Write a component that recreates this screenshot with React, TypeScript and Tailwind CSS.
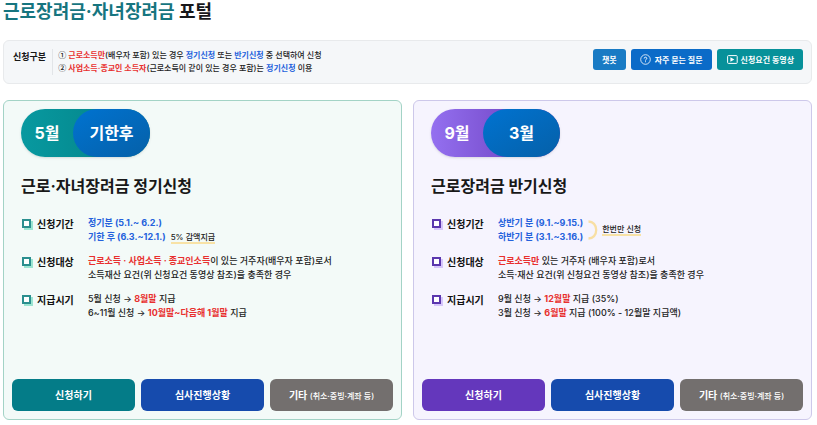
import type { ReactNode } from "react";

type Theme = {
  card: string;
  pill: string;
  box: string;
  apply: string;
};

const green: Theme = {
  card: "border-[#a3d3c6] bg-[#f3faf8]",
  pill: "from-[#0899a0] to-[#037f83]",
  box: "border-[#2b8f8f] shadow-[2px_2px_0_#9be5d2]",
  apply: "bg-[#047c88]",
};

const purple: Theme = {
  card: "border-[#cdc8ea] bg-[#f6f4fe]",
  pill: "from-[#9470f0] to-[#6534b4]",
  box: "border-[#5b37ae] shadow-[2px_2px_0_#d6c6fb]",
  apply: "bg-[#6437bc]",
};

function Red({ children }: { children: ReactNode }) {
  return <strong className="font-bold text-[#e8302f]">{children}</strong>;
}

function Blue({ children }: { children: ReactNode }) {
  return <strong className="font-bold text-[#2461dc]">{children}</strong>;
}

function Marked({ children }: { children: ReactNode }) {
  return (
    <span className="border-b-2 border-[#f8e2a6] text-[8px] leading-[9px] font-medium text-[#222]">
      {children}
    </span>
  );
}

function Numeral({ children }: { children: ReactNode }) {
  return <span className="font-['Noto_Sans_CJK_KR',sans-serif] leading-none">{children}</span>;
}

function Row({ theme, label, children }: { theme: Theme; label: string; children: ReactNode }) {
  return (
    <div className="flex items-start">
      <span className={`mt-[3px] mr-[6px] size-[9px] shrink-0 border-2 bg-white ${theme.box}`} />
      <dt className="w-[51px] shrink-0 text-[10px] leading-4 font-bold text-[#111]">{label}</dt>
      <dd className="text-[9px] leading-[14px] font-medium whitespace-nowrap text-[#222]">{children}</dd>
    </div>
  );
}

function Card({
  theme,
  first,
  second,
  title,
  children,
}: {
  theme: Theme;
  first: string;
  second: string;
  title: string;
  children: ReactNode;
}) {
  const action = "h-8 flex-1 rounded-md text-[10px] font-bold whitespace-nowrap text-white";
  return (
    <section className={`flex min-w-0 flex-1 flex-col rounded-md border p-2 ${theme.card}`}>
      <div className="px-[9px]">
        <div
          className={`flex h-12 w-[129px] rounded-full bg-linear-to-r text-base font-bold text-white shadow-sm ${theme.pill}`}
        >
          <span className="flex flex-1 items-center justify-center">{first}</span>
          <span className="flex w-[77px] items-center justify-center rounded-full bg-linear-to-br from-[#0073d1] to-[#0560a8]">
            {second}
          </span>
        </div>
        <h2 className="mt-[17px] text-base leading-6 font-bold text-[#181818]">{title}</h2>
        <dl className="mt-[18px] flex flex-col gap-[10px] pl-px">{children}</dl>
      </div>
      <div className="mt-[59px] flex gap-[6px]">
        <button type="button" className={`${action} ${theme.apply}`}>
          신청하기
        </button>
        <button type="button" className={`${action} bg-[#164bad]`}>
          심사진행상황
        </button>
        <button type="button" className={`${action} bg-[#736f6e]`}>
          기타 <span className="text-[8px] font-medium">(취소·증빙·계좌 등)</span>
        </button>
      </div>
    </section>
  );
}

export default function App() {
  const link = "flex h-[21px] items-center rounded-[3px] text-[8px] font-bold text-white";
  return (
    <main className="bg-white pr-[5px] pb-[6px] pl-[3px] font-[Inter,'Noto_Sans_CJK_KR',sans-serif]">
      <h1 className="text-lg leading-6 font-bold text-[#18181b]">
        <span className="text-[#16757f]">근로장려금·자녀장려금</span> 포털
      </h1>

      <div className="mt-4 flex items-start justify-between rounded-md border border-[#e8eaec] bg-[#f5f7f9] pt-2 pr-2 pb-2 pl-[9px]">
        <div className="flex items-start">
          <strong className="text-[9px] leading-4 font-bold text-[#181818]">신청구분</strong>
          <ol className="ml-[6px] border-l border-[#e2e5e8] pl-[5px] text-[8px] leading-[13px] font-medium text-[#222]">
            <li>
              <Numeral>①</Numeral> <Red>근로소득만</Red>(배우자 포함) 있는 경우 <Blue>정기신청</Blue> 또는{" "}
              <Blue>반기신청</Blue> 중 선택하여 신청
            </li>
            <li>
              <Numeral>②</Numeral> <Red>사업소득·종교인 소득자</Red>(근로소득이 같이 있는 경우 포함)는{" "}
              <Blue>정기신청</Blue> 이용
            </li>
          </ol>
        </div>
        <div className="flex shrink-0 gap-[5px]">
          <button type="button" className={`${link} bg-[#197bc4] px-[9px]`}>
            챗봇
          </button>
          <button type="button" className={`${link} gap-1 bg-[#0b6bc8] px-[9px]`}>
            <svg viewBox="0 0 11 11" className="size-[11px]" fill="none" stroke="currentColor" aria-hidden="true">
              <circle cx="5.5" cy="5.5" r="4.8" strokeWidth="0.8" />
              <path d="M4.2 4.5a1.3 1.3 0 1 1 1.9 1.1c-.4.2-.6.4-.6.9M5.5 7.3v.9" strokeWidth="0.9" />
            </svg>
            자주 묻는 질문
          </button>
          <button type="button" className={`${link} gap-[3px] bg-[#07919a] pr-[9px] pl-[10px]`}>
            <svg viewBox="0 0 11 9" className="h-[9px] w-[11px]" fill="none" stroke="currentColor" aria-hidden="true">
              <rect x="0.6" y="0.6" width="9.6" height="7.8" rx="0.8" strokeWidth="1" />
              <path d="M3.4 2.2v4.6l4-2.3z" fill="currentColor" stroke="none" />
            </svg>
            신청요건 동영상
          </button>
        </div>
      </div>

      <div className="mt-4 flex gap-[11px]">
        <Card theme={green} first="5월" second="기한후" title="근로·자녀장려금 정기신청">
          <Row theme={green} label="신청기간">
            <Blue>정기분 (5.1.~ 6.2.)</Blue>
            <br />
            <Blue>기한 후 (6.3.~12.1.)</Blue>
            <span className="ml-[5px]">
              <Marked>5% 감액지급</Marked>
            </span>
          </Row>
          <Row theme={green} label="신청대상">
            <Red>근로소득 · 사업소득 · 종교인소득</Red>이 있는 거주자(배우자 포함)로서
            <br />
            소득재산 요건(위 신청요건 동영상 참조)을 충족한 경우
          </Row>
          <Row theme={green} label="지급시기">
            5월 신청 → <Red>8월말</Red> 지급
            <br />
            6~11월 신청 → <Red>10월말~다음해 1월말</Red> 지급
          </Row>
        </Card>

        <Card theme={purple} first="9월" second="3월" title="근로장려금 반기신청">
          <Row theme={purple} label="신청기간">
            <div className="flex items-center">
              <div>
                <Blue>상반기 분 (9.1.~9.15.)</Blue>
                <br />
                <Blue>하반기 분 (3.1.~3.16.)</Blue>
              </div>
              <svg viewBox="0 0 10 20" className="mr-1 ml-[5px] h-5 w-[10px]" fill="none" aria-hidden="true">
                <path d="M0.5 1.5C5 1.5 8.2 5 8.2 10S5 18.5 0.5 18.5" stroke="#f8dfa4" strokeWidth="2.3" />
              </svg>
              <Marked>한번만 신청</Marked>
            </div>
          </Row>
          <Row theme={purple} label="신청대상">
            <Red>근로소득만</Red> 있는 거주자 (배우자 포함)로서
            <br />
            소득·재산 요건(위 신청요건 동영상 참조)을 충족한 경우
          </Row>
          <Row theme={purple} label="지급시기">
            9월 신청 → <Red>12월말</Red> 지급 (35%)
            <br />
            3월 신청 → <Red>6월말</Red> 지급 (100% - 12월말 지급액)
          </Row>
        </Card>
      </div>
    </main>
  );
}
